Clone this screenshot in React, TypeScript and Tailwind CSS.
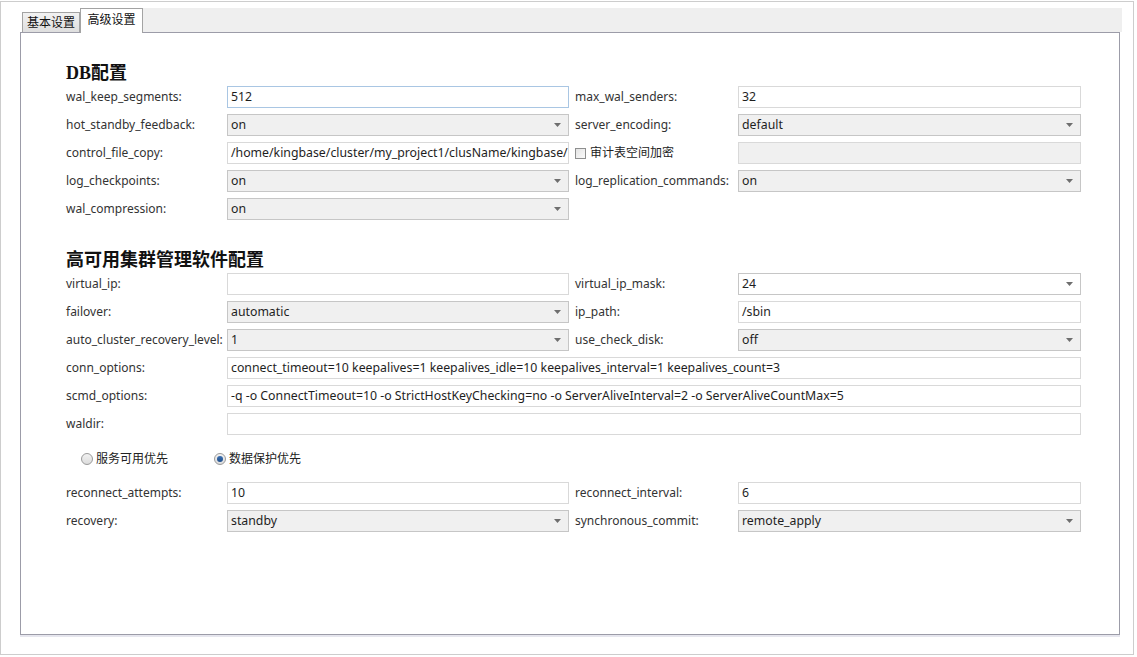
import React from 'react';

// Advanced settings tab of the cluster deploy dialog

const FONT = "font-['Noto_Sans','Noto_Sans_CJK_SC',sans-serif]";

function Arrow() {
  return (
    <svg width="7" height="4" viewBox="0 0 7 4" className="shrink-0">
      <path d="M0 0 L7 0 L3.5 4 Z" fill="#6e6e6e" />
    </svg>
  );
}

function TextBox({ value = '', focus = false, disabled = false, wide = false, w = 'left' }: {
  value?: string;
  focus?: boolean;
  disabled?: boolean;
  wide?: boolean;
  w?: 'left' | 'right';
}) {
  const width = wide ? 'w-[854px]' : w === 'left' ? 'w-[342px]' : 'w-[343px]';
  const border = focus ? 'border-[#a9c6e3]' : 'border-[#d9d9d9]';
  const bg = disabled ? 'bg-[#f0f0f0] border-[#cfcfcf]' : 'bg-white';
  return (
    <div className={`${width} h-[22px] shrink-0 border ${border} ${bg} flex items-center pl-[3px] text-[12.3px] text-[#1e1e1e] whitespace-nowrap overflow-hidden`}>
      {value}
    </div>
  );
}

function Select({ value, white = false, w = 'left' }: { value: string; white?: boolean; w?: 'left' | 'right' }) {
  const width = w === 'left' ? 'w-[342px]' : 'w-[343px]';
  return (
    <div className={`${width} h-[22px] shrink-0 border border-[#c6c6c6] ${white ? 'bg-white' : 'bg-[#f0f0f0]'} flex items-center pl-[3px] pr-[7px] text-[12.3px] text-[#1e1e1e]`}>
      <span className="flex-1">{value}</span>
      <Arrow />
    </div>
  );
}

function Label({ children, right = false }: { children: React.ReactNode; right?: boolean }) {
  return (
    <div className={`${right ? 'w-[169px] pl-[6px]' : 'w-[161px]'} shrink-0 text-[12px] text-[#333] whitespace-nowrap`}>
      {children}
    </div>
  );
}

function Row({ children }: { children: React.ReactNode }) {
  return <div className="flex h-[22px] items-center">{children}</div>;
}

function Heading({ children }: { children: React.ReactNode }) {
  return (
    <div className="h-[22px] leading-[22px] text-[18px] font-bold text-[#111] font-['Liberation_Serif','Noto_Sans_CJK_SC',serif]">
      {children}
    </div>
  );
}

function Radio({ checked, label }: { checked: boolean; label: string }) {
  return (
    <div className="flex items-center gap-[3px]">
      <div className="w-[12px] h-[12px] rounded-full border border-[#9a9a9a] bg-gradient-to-b from-[#f2f2f2] to-[#dcdcdc] flex items-center justify-center">
        {checked && <div className="w-[6px] h-[6px] rounded-full bg-gradient-to-b from-[#3b6fb0] to-[#1e4e8c]" />}
      </div>
      <span className="text-[12px] text-[#222]">{label}</span>
    </div>
  );
}

export default function App() {
  return (
    <div className={`${FONT} mt-px w-[1134px] h-[654px] border border-[#cdcdcd] bg-white pl-[19px] pt-[6px]`}>
      {/* tab bar */}
      <div className="flex items-end h-[24px] w-[1102px]">
        <div className="w-[2px]" />
        <div className="h-[20px] w-[58px] border border-b-0 border-[#a3a3a3] bg-gradient-to-b from-[#f2f2f2] to-[#dedede] flex items-center justify-center text-[12px] text-[#111]">
          基本设置
        </div>
        <div className="relative z-10 -mb-px h-[25px] w-[63px] border border-b-0 border-[#a3a3a3] bg-white flex items-start pt-[2px] justify-center text-[12px] text-[#111]">
          高级设置
        </div>
        <div className="flex-1 h-[24px] bg-[#efefef]" />
      </div>

      {/* panel */}
      <div className="w-[1100px] h-[603px] border border-[#9c9ca8] shadow-[0_2px_0_#e6e6ee] pl-[45px] pt-[29px]">
        <Heading>DB配置</Heading>
        <div className="mt-[2px] flex flex-col gap-[6px]">
          <Row>
            <Label>wal_keep_segments:</Label>
            <TextBox value="512" focus />
            <Label right>max_wal_senders:</Label>
            <TextBox value="32" w="right" />
          </Row>
          <Row>
            <Label>hot_standby_feedback:</Label>
            <Select value="on" />
            <Label right>server_encoding:</Label>
            <Select value="default" w="right" />
          </Row>
          <Row>
            <Label>control_file_copy:</Label>
            <TextBox value="/home/kingbase/cluster/my_project1/clusName/kingbase/" />
            <div className="w-[169px] shrink-0 pl-[6px] flex items-center gap-[4px]">
              <div className="w-[11px] h-[11px] border border-[#8e8f8f] bg-gradient-to-br from-[#e4e4e4] to-[#fafafa]" />
              <span className="text-[12px] text-[#222]">审计表空间加密</span>
            </div>
            <TextBox disabled w="right" />
          </Row>
          <Row>
            <Label>log_checkpoints:</Label>
            <Select value="on" />
            <Label right>log_replication_commands:</Label>
            <Select value="on" w="right" />
          </Row>
          <Row>
            <Label>wal_compression:</Label>
            <Select value="on" />
          </Row>
        </div>

        <div className="mt-[29px]">
          <Heading>高可用集群管理软件配置</Heading>
        </div>
        <div className="mt-[2px] flex flex-col gap-[6px]">
          <Row>
            <Label>virtual_ip:</Label>
            <TextBox />
            <Label right>virtual_ip_mask:</Label>
            <Select value="24" white w="right" />
          </Row>
          <Row>
            <Label>failover:</Label>
            <Select value="automatic" />
            <Label right>ip_path:</Label>
            <TextBox value="/sbin" w="right" />
          </Row>
          <Row>
            <Label>auto_cluster_recovery_level:</Label>
            <Select value="1" />
            <Label right>use_check_disk:</Label>
            <Select value="off" w="right" />
          </Row>
          <Row>
            <Label>conn_options:</Label>
            <TextBox wide value="connect_timeout=10 keepalives=1 keepalives_idle=10 keepalives_interval=1 keepalives_count=3" />
          </Row>
          <Row>
            <Label>scmd_options:</Label>
            <TextBox wide value="-q -o ConnectTimeout=10 -o StrictHostKeyChecking=no -o ServerAliveInterval=2 -o ServerAliveCountMax=5" />
          </Row>
          <Row>
            <Label>waldir:</Label>
            <TextBox wide />
          </Row>
        </div>

        <div className="mt-[13px] h-[22px] flex items-center pl-[15px] gap-[46px]">
          <Radio checked={false} label="服务可用优先" />
          <Radio checked label="数据保护优先" />
        </div>

        <div className="mt-[12px] flex flex-col gap-[6px]">
          <Row>
            <Label>reconnect_attempts:</Label>
            <TextBox value="10" />
            <Label right>reconnect_interval:</Label>
            <TextBox value="6" w="right" />
          </Row>
          <Row>
            <Label>recovery:</Label>
            <Select value="standby" />
            <Label right>synchronous_commit:</Label>
            <Select value="remote_apply" w="right" />
          </Row>
        </div>
      </div>
    </div>
  );
}
